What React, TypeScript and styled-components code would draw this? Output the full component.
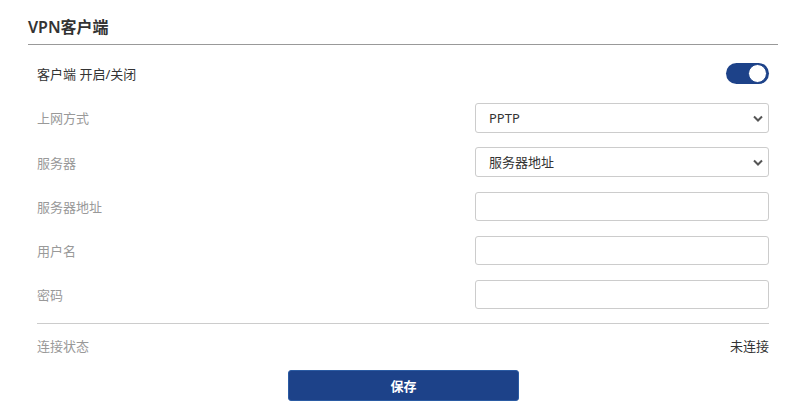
import React, { useState } from "react";
import styled, { createGlobalStyle } from "styled-components";

const GlobalStyle = createGlobalStyle`
  body {
    margin: 0;
    background: #fff;
    font-family: "Noto Sans", "Noto Sans CJK SC", sans-serif;
    color: #333;
  }
`;

const Panel = styled.div`
  width: 750px;
  padding: 0 0 0 28px;
`;

const Title = styled.h2`
  margin: 0;
  padding-top: 15px;
  height: 29px;
  font-size: 16px;
  font-weight: 600;
  line-height: 24px;
  color: #333;
  border-bottom: 1px solid #999;
`;

const Form = styled.div`
  padding: 6px 9px 0;
  display: flex;
  flex-direction: column;
`;

const Row = styled.div<{ $h?: number }>`
  display: flex;
  align-items: center;
  justify-content: space-between;
  height: ${(p) => p.$h ?? 44}px;
`;

const Label = styled.span<{ $dark?: boolean }>`
  font-size: 13px;
  color: ${(p) => (p.$dark ? "#333" : "#999")};
`;

const Value = styled.span`
  font-size: 13px;
  color: #333;
`;

const Field = styled.div`
  position: relative;
  width: 294px;
`;

const Select = styled.select`
  appearance: none;
  width: 100%;
  height: 30px;
  padding: 0 28px 0 13px;
  font-family: inherit;
  font-size: 13px;
  color: #333;
  background: #fff;
  border: 1px solid #ccc;
  border-radius: 3px;
  outline: none;
`;

const Chevron = styled.svg`
  position: absolute;
  right: 5px;
  top: 12px;
  pointer-events: none;
`;

const Input = styled.input`
  box-sizing: border-box;
  width: 100%;
  height: 29px;
  padding: 0 13px;
  font-family: inherit;
  font-size: 13px;
  border: 1px solid #ccc;
  border-radius: 3px;
  outline: none;
`;

const Toggle = styled.button<{ $on: boolean }>`
  position: relative;
  width: 43px;
  height: 21px;
  padding: 0;
  border: none;
  border-radius: 11px;
  background: ${(p) => (p.$on ? "#1d4289" : "#ccc")};
  cursor: pointer;

  &::after {
    content: "";
    position: absolute;
    top: 1px;
    left: ${(p) => (p.$on ? "22px" : "1px")};
    width: 17px;
    height: 17px;
    border-radius: 50%;
    background: #fff;
    border: 1px solid #1d4289;
  }
`;

const Divider = styled.hr`
  margin: 7px 0 0;
  border: none;
  border-top: 1px solid #ccc;
`;

const Actions = styled.div`
  display: flex;
  justify-content: center;
  padding-top: 4px;
`;

const SaveButton = styled.button`
  width: 231px;
  height: 31px;
  background: #1d4289;
  border: 1px solid #2b5ba3;
  border-radius: 3px;
  color: #fff;
  font-family: inherit;
  font-size: 13px;
  font-weight: 700;
  cursor: pointer;
`;

const Arrow = () => (
  <Chevron width="12" height="8" viewBox="0 0 12 8">
    <path d="M2 1.5 L6 5.5 L10 1.5" fill="none" stroke="#555" strokeWidth="2" />
  </Chevron>
);

export default function App() {
  const [on, setOn] = useState(true);
  return (
    <>
      <GlobalStyle />
      <Panel>
        <Title>VPN客户端</Title>
        <Form>
          <Row>
            <Label $dark>客户端 开启/关闭</Label>
            <Toggle $on={on} onClick={() => setOn(!on)} />
          </Row>
          <Row $h={45}>
            <Label>上网方式</Label>
            <Field>
              <Select defaultValue="PPTP">
                <option>PPTP</option>
                <option>L2TP</option>
              </Select>
              <Arrow />
            </Field>
          </Row>
          <Row>
            <Label>服务器</Label>
            <Field>
              <Select defaultValue="服务器地址">
                <option>服务器地址</option>
              </Select>
              <Arrow />
            </Field>
          </Row>
          <Row>
            <Label>服务器地址</Label>
            <Field>
              <Input />
            </Field>
          </Row>
          <Row>
            <Label>用户名</Label>
            <Field>
              <Input />
            </Field>
          </Row>
          <Row>
            <Label>密码</Label>
            <Field>
              <Input type="password" />
            </Field>
          </Row>
          <Divider />
          <Row $h={42}>
            <Label>连接状态</Label>
            <Value>未连接</Value>
          </Row>
        </Form>
      </Panel>
      <Actions>
        <SaveButton>保存</SaveButton>
      </Actions>
    </>
  );
}
